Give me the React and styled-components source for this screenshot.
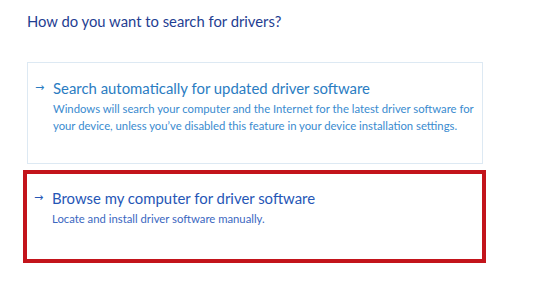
import React from 'react';
import styled, { createGlobalStyle } from 'styled-components';

const GlobalStyle = createGlobalStyle`
  html, body {
    margin: 0;
    padding: 0;
    background: #ffffff;
  }
`;

const Page = styled.div`
  width: 557px;
  height: 295px;
  box-sizing: border-box;
  padding: 10px 0 0 27px;
  font-family: 'Lato', 'Open Sans', sans-serif;
  background: #fff;
`;

const Heading = styled.h1`
  margin: 0 0 30px;
  font-size: 14.8px;
  font-weight: 400;
  line-height: 22px;
  color: #1f3e92;
`;

const Options = styled.div`
  display: flex;
  flex-direction: column;
  gap: 6px;
  width: 456px;
`;

const Option = styled.div`
  display: flex;
  gap: 10px;
  box-sizing: border-box;
  border: ${({ $highlight }) => ($highlight ? '4px solid #c3141b' : '1px solid #dde9f3')};
  margin: ${({ $highlight }) => ($highlight ? '0 -3px 0 -4px' : '0')};
  padding: ${({ $highlight }) => ($highlight ? '12px 3px 0 7px' : '13px 3px 0 7px')};
  height: ${({ $highlight }) => ($highlight ? '93px' : '102px')};
`;

const Arrow = styled.span`
  flex: none;
  width: 8px;
  font-family: 'DejaVu Sans', sans-serif;
  font-size: 11px;
  line-height: 23px;
  color: ${({ $color }) => $color};
`;

const Body = styled.div`
  display: flex;
  flex-direction: column;
`;

const Title = styled.div`
  font-size: 14.9px;
  line-height: 24px;
  color: ${({ $color }) => $color};
`;

const Desc = styled.div`
  font-size: 11.3px;
  line-height: 17px;
  color: ${({ $color }) => $color};
`;

const options = [
  {
    title: 'Search automatically for updated driver software',
    desc: 'Windows will search your computer and the Internet for the latest driver software for your device, unless you\u2019ve disabled this feature in your device installation settings.',
    titleColor: '#2a7cc2',
    descColor: '#3a8bcf',
  },
  {
    title: 'Browse my computer for driver software',
    desc: 'Locate and install driver software manually.',
    titleColor: '#2556b6',
    descColor: '#3b67bf',
    highlight: true,
  },
];

export default function App() {
  return (
    <Page>
      <GlobalStyle />
      <Heading>How do you want to search for drivers?</Heading>
      <Options>
        {options.map((o) => (
          <Option key={o.title} $highlight={o.highlight}>
            <Arrow $color={o.titleColor}>→</Arrow>
            <Body>
              <Title $color={o.titleColor}>{o.title}</Title>
              <Desc $color={o.descColor}>{o.desc}</Desc>
            </Body>
          </Option>
        ))}
      </Options>
    </Page>
  );
}
